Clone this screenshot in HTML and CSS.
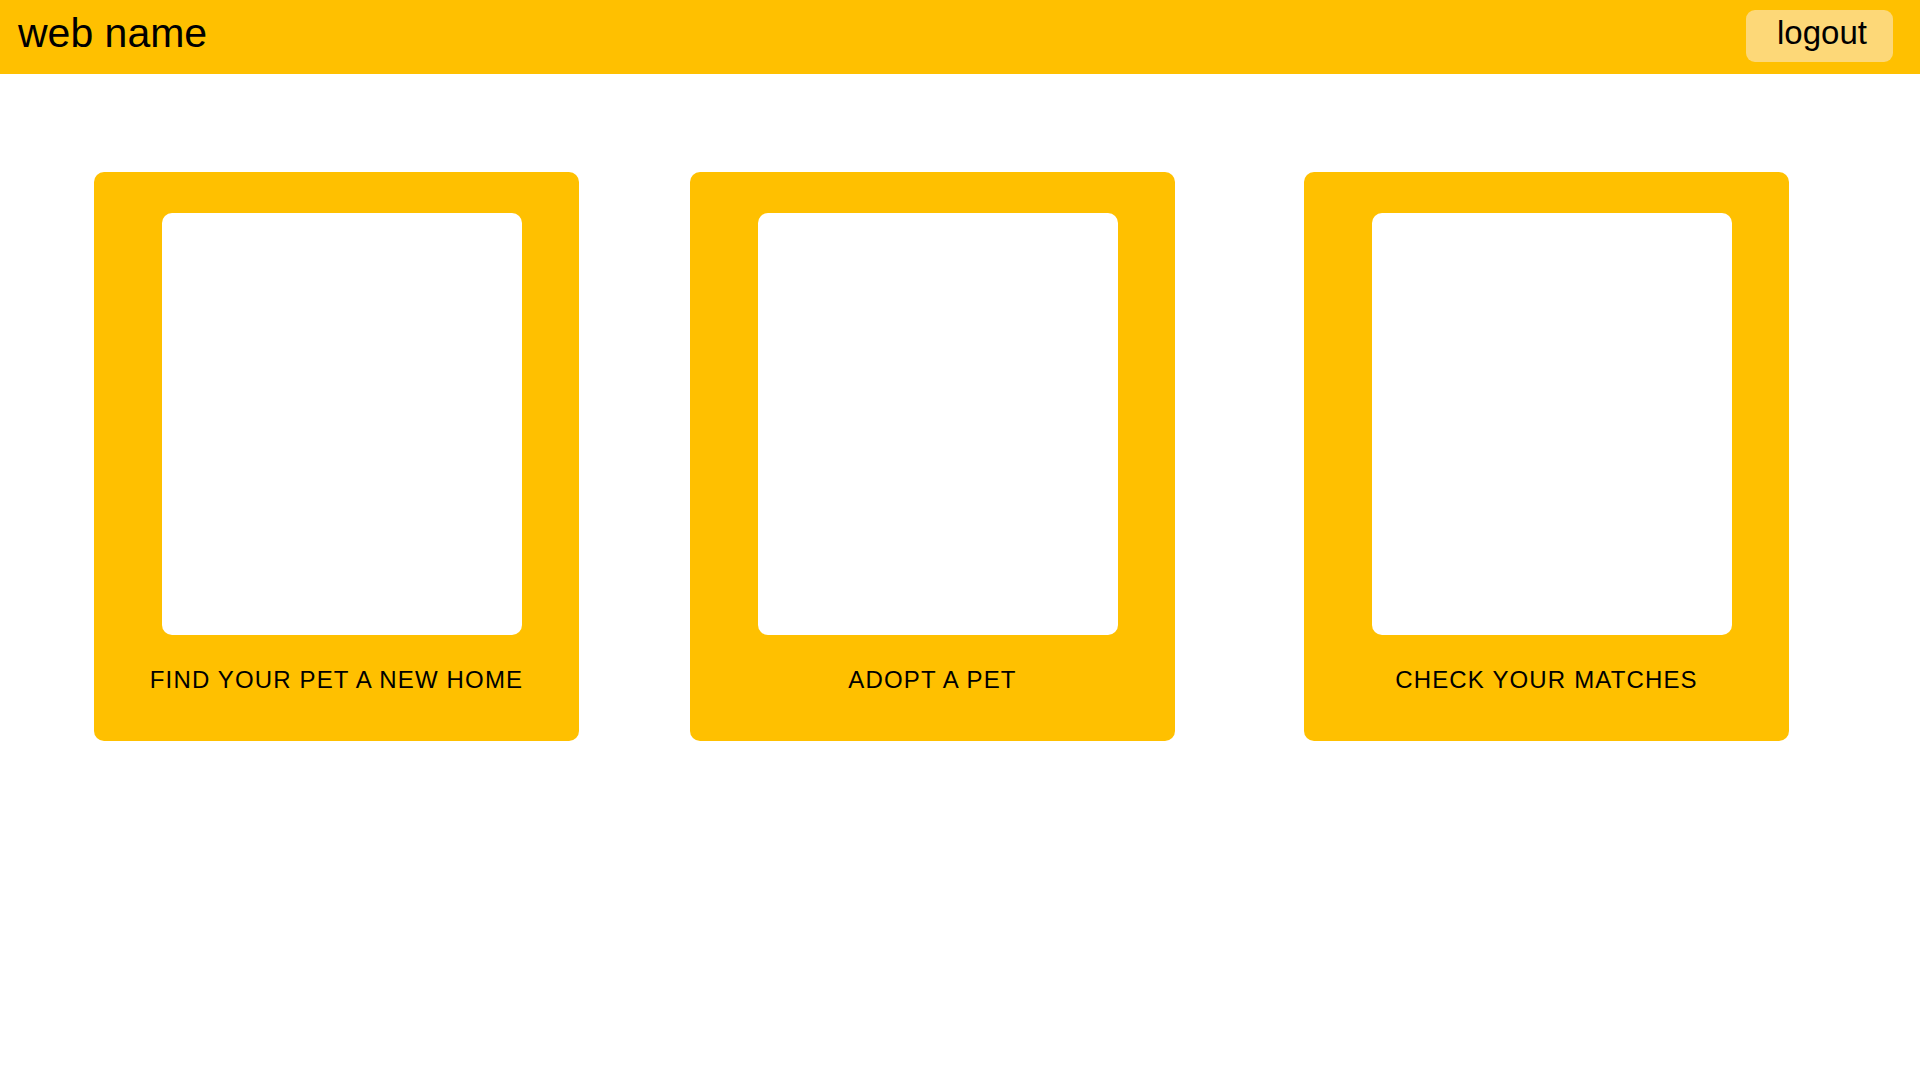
FILE: index.html
```html
<!DOCTYPE html>
<html lang="en">
<head>
  <meta charset="UTF-8">
  <meta name="viewport" content="width=device-width, initial-scale=1.0">
  <title>web name</title>
  <link rel="stylesheet" href="styles.css">
</head>
<body>
  <header class="topbar">
    <div class="brand">web name</div>
    <button class="logout">logout</button>
  </header>

  <main class="cards">
    <div class="card">
      <div class="card-image"></div>
      <div class="card-label">FIND YOUR PET A NEW HOME</div>
    </div>
    <div class="card">
      <div class="card-image"></div>
      <div class="card-label">ADOPT A PET</div>
    </div>
    <div class="card">
      <div class="card-image"></div>
      <div class="card-label">CHECK YOUR MATCHES</div>
    </div>
  </main>
</body>
</html>
```

FILE: styles.css
```css
* {
  margin: 0;
  padding: 0;
  box-sizing: border-box;
}

body {
  font-family: 'Liberation Sans', Arial, sans-serif;
  background-color: #fff;
  color: #000;
}

.topbar {
  display: flex;
  justify-content: space-between;
  align-items: flex-start;
  height: 74px;
  padding: 0 27px 0 18px;
  background-color: #ffc000;
}

.brand {
  margin-top: 13px;
  font-size: 41px;
  line-height: 40px;
}

.logout {
  width: 147px;
  height: 52px;
  margin-top: 10px;
  padding: 0 22px 6px 31px;
  font-family: inherit;
  font-size: 33px;
  line-height: 46px;
  text-align: left;
  color: #000;
  background-color: #fdd878;
  border: none;
  border-radius: 9px;
  cursor: pointer;
}

.cards {
  display: flex;
  padding: 98px 0 0 94px;
}

.card {
  display: flex;
  flex-direction: column;
  width: 485px;
  height: 569px;
  padding-top: 41px;
  background-color: #ffc000;
  border-radius: 10px;
}

.card + .card {
  margin-left: 111px;
}

.card:last-child {
  margin-left: 129px;
}

.card-image {
  width: 360px;
  height: 422px;
  margin-left: 68px;
  background-color: #fff;
  border-radius: 10px;
}

.card-label {
  margin-top: 31px;
  font-size: 24px;
  line-height: 28px;
  letter-spacing: 1.15px;
  text-align: center;
}
```
